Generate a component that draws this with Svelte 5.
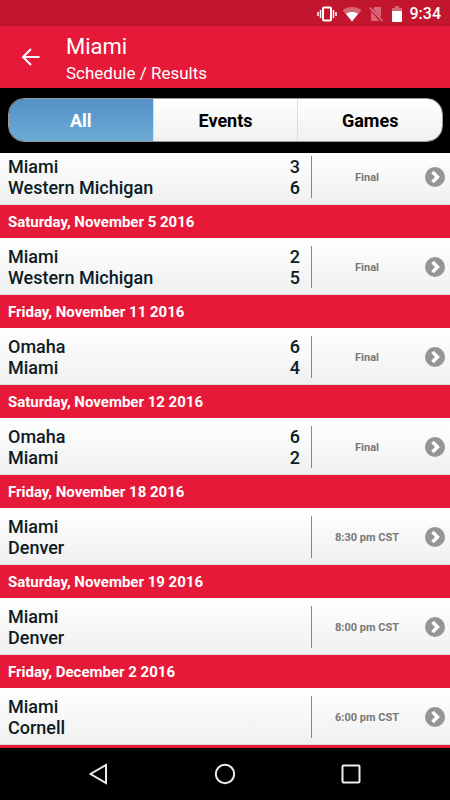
<script>
  const tabs = ['All', 'Events', 'Games'];
  let active = $state('All');

  const games = [
    { away: 'Miami', home: 'Western Michigan', scores: [3, 6], status: 'Final' },
    { date: 'Saturday, November 5 2016', away: 'Miami', home: 'Western Michigan', scores: [2, 5], status: 'Final' },
    { date: 'Friday, November 11 2016', away: 'Omaha', home: 'Miami', scores: [6, 4], status: 'Final' },
    { date: 'Saturday, November 12 2016', away: 'Omaha', home: 'Miami', scores: [6, 2], status: 'Final' },
    { date: 'Friday, November 18 2016', away: 'Miami', home: 'Denver', status: '8:30 pm CST' },
    { date: 'Saturday, November 19 2016', away: 'Miami', home: 'Denver', status: '8:00 pm CST' },
    { date: 'Friday, December 2 2016', away: 'Miami', home: 'Cornell', status: '6:00 pm CST' }
  ];
</script>

<div class="screen">
  <div class="status">
    <svg width="20" height="16" viewBox="0 0 20 16" fill="none" stroke="#fff">
      <rect x="6" y="1.5" width="8" height="13" rx="1" stroke-width="2" />
      <path d="M3.5 4v8M1 6v4M16.500 4v8M19 6v4" stroke-width="1.500" />
    </svg>
    <svg class="wifi" width="20" height="16" viewBox="0 0 20 16">
      <path d="M0.500 4.200C6 -0.200 14 -0.200 19.500 4.200L10 15.500Z" fill="#fff" opacity=".35" />
      <path d="M4 7.800C7.500 5.300 12.500 5.300 16 7.800L10 15.500Z" fill="#fff" />
    </svg>
    <svg class="sim" width="16" height="16" viewBox="0 0 16 16">
      <path d="M6.500 1H13v11L4.800 3Z M3 5.500L11.500 15H4Q3 15 3 14Z" fill="#fff" opacity=".35" />
      <path d="M1.500 1.500L14.500 15" stroke="#fff" stroke-width="1.300" opacity=".45" />
    </svg>
    <svg class="battery" width="10" height="16" viewBox="0 0 10 16">
      <path d="M0 2h3V0h4v2h3v4H0Z" fill="#fff" opacity=".35" />
      <path d="M0 5h10v10q0 1-1 1H1q-1 0-1-1Z" fill="#fff" />
    </svg>
    <span>9:34</span>
  </div>

  <header>
    <button class="back" aria-label="Back">
      <svg width="20" height="18" viewBox="0 0 20 18" fill="none" stroke="#fff" stroke-width="2">
        <path d="M18.500 9H2M10 1L2 9l8 8" />
      </svg>
    </button>
    <div class="title">
      <h1>Miami</h1>
      <p>Schedule / Results</p>
    </div>
  </header>

  <nav class="tabs">
    <div class="segments">
      {#each tabs as tab}
        <button class:active={active === tab} aria-pressed={active === tab} onclick={() => (active = tab)}>{tab}</button>
      {/each}
    </div>
  </nav>

  <main>
    <div class="list">
      {#each games as game}
        {#if game.date}<h2>{game.date}</h2>{/if}
        <a class="game" href="#game">
          <span class="teams">
            <span>{game.away}</span>
            <span>{game.home}</span>
          </span>
          <span class="scores">
            {#each game.scores ?? [] as score}<span>{score}</span>{/each}
          </span>
          <span class="state">{game.status}</span>
          <svg width="20" height="20" viewBox="0 0 20 20">
            <circle cx="10" cy="10" r="10" fill="#959595" />
            <path d="M7.500 5l5 5L7.500 15" fill="none" stroke="#fff" stroke-width="3.500" />
          </svg>
        </a>
      {/each}
    </div>
  </main>

  <footer>
    <button aria-label="Back">
      <svg width="20" height="22" viewBox="0 0 20 22"><path d="M17 2v18L1.500 11Z" /></svg>
    </button>
    <button aria-label="Home">
      <svg width="22" height="22" viewBox="0 0 22 22"><circle cx="11" cy="11" r="9.200" /></svg>
    </button>
    <button aria-label="Recent apps">
      <svg width="20" height="20" viewBox="0 0 20 20"><rect x="1.500" y="1.500" width="17" height="17" rx="1" /></svg>
    </button>
  </footer>
</div>

<style>
  :global(body) {
    margin: 0;
    background: #000;
  }
  .screen {
    display: flex;
    flex-direction: column;
    height: 100vh;
    overflow: hidden;
    background: #000;
    font-family: Roboto, "Liberation Sans", sans-serif;
  }
  button {
    margin: 0;
    padding: 0;
    border: 0;
    background: none;
    font: inherit;
    color: inherit;
  }
  svg {
    display: block;
    flex: none;
  }
  .status {
    display: flex;
    flex: none;
    align-items: center;
    justify-content: flex-end;
    height: 26px;
    padding: 1px 9px 0 0;
    box-sizing: border-box;
    background: #c2152e;
    color: #fff;
    font-size: 16px;
    font-weight: 500;
  }
  .wifi {
    margin-left: 5px;
  }
  .sim {
    margin-left: 6px;
  }
  .battery {
    margin: 0 8px;
  }
  header {
    display: flex;
    flex: none;
    align-items: center;
    height: 62px;
    background: #e61938;
    color: #fff;
  }
  .back {
    margin: 0 25px 0 21px;
  }
  .title {
    padding-top: 4px;
  }
  h1,
  p,
  h2 {
    margin: 0;
  }
  h1 {
    font-size: 22px;
    line-height: 28px;
    font-weight: 400;
  }
  p {
    font-size: 17px;
    line-height: 24px;
  }
  .tabs {
    flex: none;
    padding: 10px 7px 11px 8px;
  }
  .segments {
    display: flex;
    height: 44px;
    box-sizing: border-box;
    overflow: hidden;
    border: 1px solid #999;
    border-radius: 16px;
  }
  .segments button {
    flex: 1;
    background: linear-gradient(#fff, #f0f0f0);
    color: #000;
    font-size: 18px;
    font-weight: 700;
  }
  .segments button + button {
    border-left: 1px solid #ddd;
  }
  .segments .active {
    background: linear-gradient(#5591c6, #6caad6);
    color: #fff;
  }
  main {
    flex: 1;
    min-height: 0;
    overflow: hidden;
    background: #e61938;
  }
  /* The list rests slightly scrolled under the tab bar. */
  .list {
    margin-top: -5px;
  }
  h2 {
    height: 33px;
    padding-left: 8px;
    background: #e61938;
    color: #fff;
    font-size: 15px;
    line-height: 34px;
    font-weight: 700;
  }
  .game {
    display: flex;
    align-items: center;
    height: 57px;
    box-sizing: border-box;
    padding: 2px 5px 0 8px;
    border-bottom: 1px solid #ddd;
    background: linear-gradient(#fff, #f0f0f0);
    color: #0b1c26;
    font-size: 18px;
    line-height: 21px;
    font-weight: 500;
    text-decoration: none;
  }
  .teams,
  .scores {
    display: flex;
    flex-direction: column;
  }
  .teams {
    flex: 1;
  }
  .scores {
    height: 42px;
    padding-right: 11px;
    border-right: 1px solid #888;
  }
  .state {
    width: 110px;
    margin-right: 3px;
    color: #777;
    font-size: 11px;
    font-weight: 700;
    text-align: center;
  }
  footer {
    display: flex;
    flex: none;
    align-items: center;
    justify-content: center;
    gap: 105px;
    height: 52px;
  }
  footer svg {
    fill: none;
    stroke: #eee;
    stroke-width: 2;
  }
</style>
